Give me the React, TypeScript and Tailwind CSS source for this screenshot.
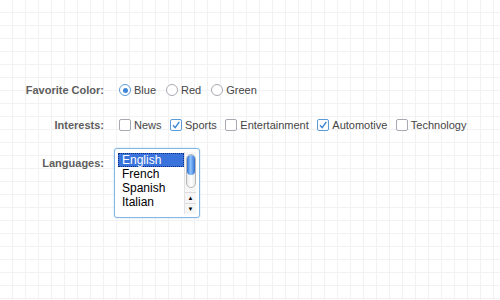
import React from "react";

const font = { fontFamily: '"Liberation Sans", Arial, sans-serif' };

function Radio({ checked, label }: { checked?: boolean; label: string }) {
  return (
    <div className="flex items-center gap-[3px]">
      <span
        className={
          "flex h-[12px] w-[12px] items-center justify-center rounded-full border bg-white " +
          (checked ? "border-[#5b9bd8]" : "border-[#a9a9b4]")
        }
      >
        {checked && <span className="h-[5px] w-[5px] rounded-full bg-[#3d86d9]" />}
      </span>
      <span className="text-[11px] text-[#454545]">{label}</span>
    </div>
  );
}

function Check({ checked, label }: { checked?: boolean; label: string }) {
  return (
    <div className="flex items-center gap-[3px]">
      <span
        className={
          "flex h-[12px] w-[12px] items-center justify-center rounded-[2px] border bg-white " +
          (checked ? "border-[#5b9bd8]" : "border-[#a9a9b4]")
        }
      >
        {checked && (
          <svg width="10" height="10" viewBox="0 0 10 10">
            <path d="M2 5.2 L4.2 7.6 L8.3 1.8" fill="none" stroke="#3a86d6" strokeWidth="1.4" />
          </svg>
        )}
      </span>
      <span className="text-[11px] text-[#454545]">{label}</span>
    </div>
  );
}

export default function App() {
  return (
    <div
      className="relative h-[300px] w-[500px] overflow-hidden bg-white bg-[linear-gradient(to_right,#f2f2f2_1px,transparent_1px),linear-gradient(to_bottom,#f2f2f2_1px,transparent_1px)] bg-[size:13px_13px] bg-[position:12px_12px] pt-[80px]"
      style={font}
    >
      <div className="flex h-[20px] items-center">
        <div className="w-[104px] text-right text-[11px] font-bold text-[#5e5e5e]">Favorite Color:</div>
        <div className="ml-[15px] flex items-center gap-[10px]">
          <Radio checked label="Blue" />
          <Radio label="Red" />
          <Radio label="Green" />
        </div>
      </div>
      <div className="mt-[15px] flex h-[20px] items-center">
        <div className="w-[104px] text-right text-[11px] font-bold text-[#5e5e5e]">Interests:</div>
        <div className="ml-[15px] flex items-center gap-[8.5px]">
          <Check label="News" />
          <Check checked label="Sports" />
          <Check label="Entertainment" />
          <Check checked label="Automotive" />
          <Check label="Technology" />
        </div>
      </div>
      <div className="mt-[13px] flex items-start">
        <div className="w-[104px] pt-[7px] text-right text-[11px] font-bold text-[#5e5e5e]">Languages:</div>
        <div className="ml-[10px] flex h-[70px] w-[86px] rounded-[3px] border border-[#86b6e2] bg-white p-[3px] shadow-[0_0_2px_#b9d6f2]">
          <div className="flex flex-1 flex-col pt-[1px] text-[12px] leading-[14px] text-black">
            <div className="border border-dotted border-[#0b2b80] bg-[#3a73dc] pl-[3px] leading-[12px] text-white">English</div>
            <div className="pl-[4px]">French</div>
            <div className="pl-[4px]">Spanish</div>
            <div className="pl-[4px]">Italian</div>
          </div>
          <div className="flex w-[12px] flex-col border-l border-[#e2e2e2] bg-[#f6f6f6]">
            <div className="mx-auto mt-[2px] flex h-[34px] w-[10px] flex-col overflow-hidden rounded-full border border-[#b8b8b8] bg-[linear-gradient(to_right,#e9e9e9,#ffffff,#e9e9e9)]">
              <div className="h-[20px] w-full rounded-full bg-[linear-gradient(to_right,#2f6fcf,#8fc4ff_45%,#2f6fcf)]" />
            </div>
            <div className="flex-1" />
            <div className="flex h-[11px] items-center justify-center border-t border-[#dcdcdc] text-[6px] text-black">▲</div>
            <div className="flex h-[11px] items-center justify-center border-t border-[#dcdcdc] text-[6px] text-black">▼</div>
          </div>
        </div>
      </div>
    </div>
  );
}
